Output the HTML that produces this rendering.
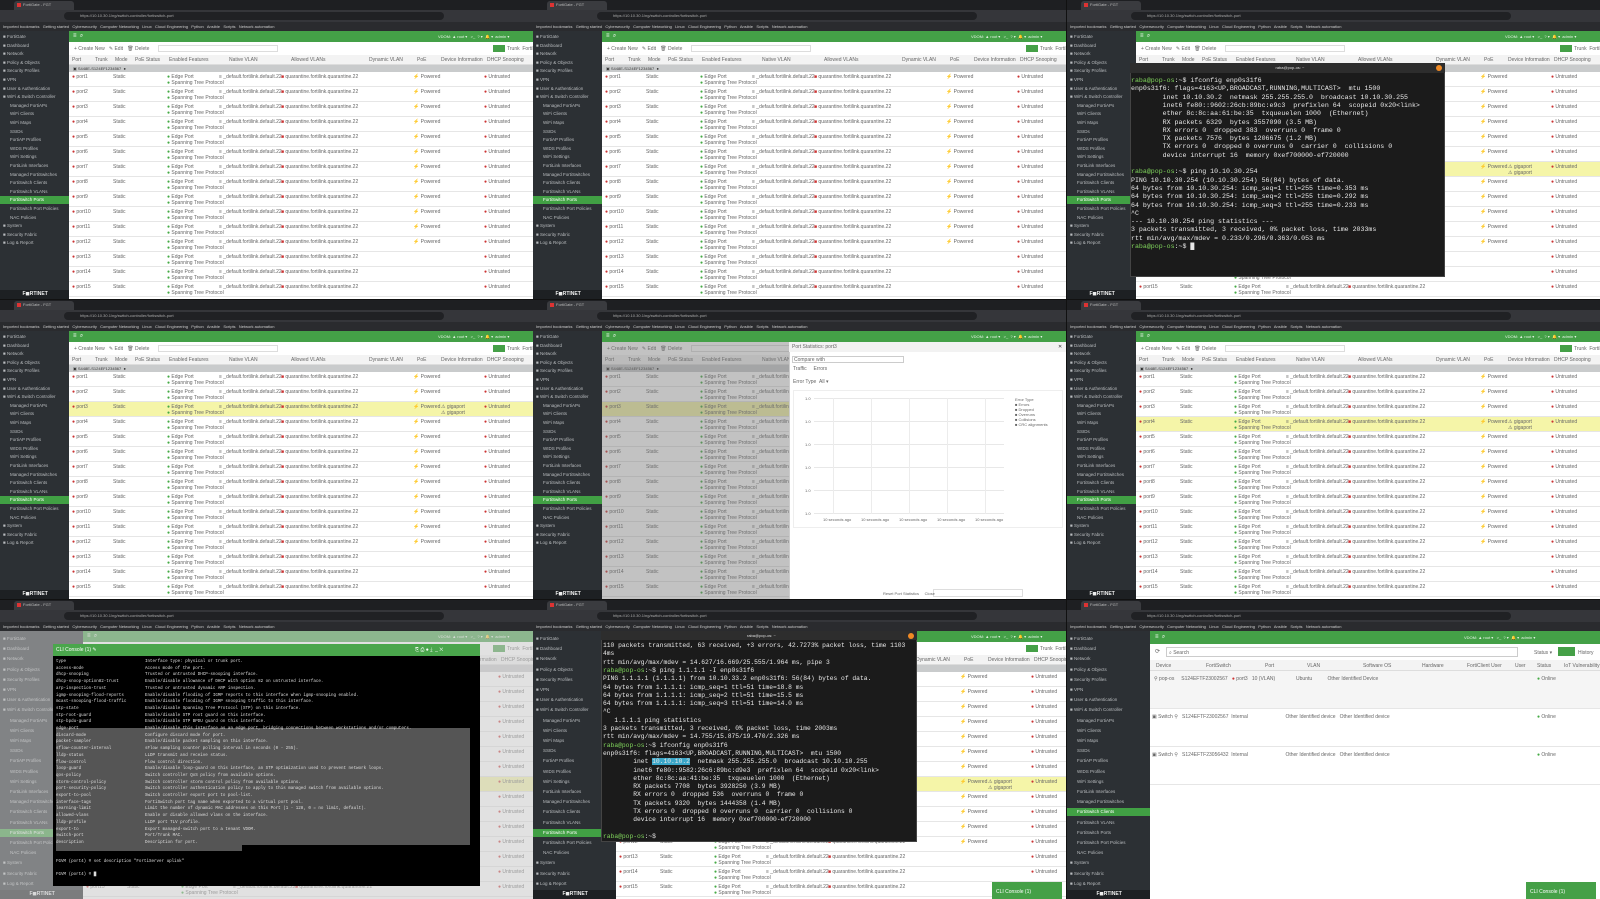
<!DOCTYPE html>
<html><head><meta charset="utf-8">
<style>
*{margin:0;padding:0;box-sizing:border-box}
body{width:1600px;height:899px;background:#111;overflow:hidden;position:relative;font-family:"Liberation Sans",sans-serif}
.p{position:absolute;width:533px;height:299px;overflow:hidden;background:#fff}
.a{position:absolute}
.t{position:absolute;white-space:nowrap;font-size:5px;color:#666;line-height:6px}
.mono{font-family:"Liberation Mono",monospace;white-space:pre}
</style></head><body>
<div id="root"></div>
<script>
var side=["FortiGate","Dashboard","Network","Policy & Objects","Security Profiles","VPN","User & Authentication","WiFi & Switch Controller","Managed FortiAPs","WiFi Clients","WiFi Maps","SSIDs","FortiAP Profiles","WIDS Profiles","WiFi Settings","FortiLink Interfaces","Managed FortiSwitches","FortiSwitch Clients","FortiSwitch VLANs","FortiSwitch Ports","FortiSwitch Port Policies","NAC Policies","System","Security Fabric","Log & Report"];
function chrome(h){
 h+='<div class="a" style="left:0;top:0;width:533px;height:10px;background:#1e1f22"></div>';
 h+='<div class="a" style="left:14px;top:1px;width:60px;height:9px;background:#3a3b3f;border-radius:3px 3px 0 0"></div><div class="a" style="left:17px;top:3px;width:4px;height:4px;background:#d33"></div><div class="t" style="left:23px;top:2px;color:#bbb;font-size:4px">FortiGate - FGT</div>';
 h+='<div class="a" style="left:0;top:10px;width:533px;height:12px;background:#35363a"></div><div class="a" style="left:64px;top:12px;width:380px;height:8px;background:#202124;border-radius:4px"></div><div class="t" style="left:80px;top:13px;color:#aaa;font-size:4px">https://10.10.30.1/ng/switch-controller/fortiswitch-port</div>';
 h+='<div class="a" style="left:0;top:22px;width:533px;height:9px;background:#2a2b2e"></div><div class="t" style="left:3px;top:24px;color:#ccc;font-size:4px">Imported bookmarks &nbsp; Getting started &nbsp; Cybersecurity &nbsp; Computer Networking &nbsp; Linux &nbsp; Cloud Engineering &nbsp; Python &nbsp; Ansible &nbsp; Scripts &nbsp; Network automation</div>';
 return h;
}
function sidebar(h,w,act,top){
 h+='<div class="a" style="left:0;top:31px;width:'+w+'px;height:268px;background:#2c3034"></div>';
 var y=top;
 for(var i=0;i<side.length;i++){
  var sub=i>=8&&i<=21;
  if(i==act)h+='<div class="a" style="left:0;top:'+(y-1)+'px;width:'+w+'px;height:8px;background:#41a044"></div>';
  h+='<div class="t" style="left:'+(sub?10:3)+'px;top:'+y+'px;color:'+(i==act?'#fff':'#b9bcbf')+';font-size:4.5px">'+(sub?'':'■ ')+side[i]+'</div>';
  y+=(w>75?10.2:8.6);
 }
 h+='<div class="a" style="left:0;top:290px;width:'+w+'px;height:9px;background:#1d2023"></div><div class="t" style="left:'+(w/2-12)+'px;top:291px;color:#eee;font-weight:bold">F◼RTINET</div>';
 return h;
}
function tbl(h,x,hl){
 h+='<div class="a" style="left:'+x+'px;top:31px;width:'+(533-x)+'px;height:11px;background:#44a047"></div><div class="t" style="left:'+(x+4)+'px;top:33px;color:#fff;font-size:6px">≡ &nbsp;⌕</div><div class="t" style="left:'+(533-95)+'px;top:34px;color:#e6f3e6;font-size:4px">VDOM: ▲ root ▾ &nbsp; &gt;_ &nbsp;? ▾ &nbsp;🔔 ▾ &nbsp;admin ▾</div>';
 h+='<div class="t" style="left:'+(x+5)+'px;top:46px">+ Create New &nbsp; ✎ Edit &nbsp; 🗑 Delete</div><div class="a" style="left:'+(x+89)+'px;top:45px;width:120px;height:7px;border:1px solid #ddd"></div>';
 h+='<div class="a" style="left:'+(533-40)+'px;top:45px;width:12px;height:7px;background:#45a047"></div><div class="t" style="left:'+(533-26)+'px;top:46px">Trunk &nbsp;FortiLink</div>';
 h+='<div class="a" style="left:'+x+'px;top:55px;width:'+(533-x)+'px;height:10px;background:#f3f3f3;border-bottom:1px solid #ddd"></div>';
 var hd=["Port","Trunk","Mode","PoE Status","Enabled Features","Native VLAN","Allowed VLANs","Dynamic VLAN","PoE","Device Information","DHCP Snooping"],cx=[3,26,46,66,100,160,222,300,348,372,418];
 for(var i=0;i<hd.length;i++)if(x+cx[i]<533)h+='<div class="t" style="left:'+(x+cx[i])+'px;top:57px">'+hd[i]+'</div>';
 h+='<div class="a" style="left:'+x+'px;top:65px;width:'+(533-x)+'px;height:7px;background:#c9cbcc"></div><div class="t" style="left:'+(x+4)+'px;top:66px;color:#333;font-size:4px">▣ S448E-S124EF1234567 &nbsp;●</div>';
 for(var r=0;r<15;r++){
  var y=72+r*15;
  if(r==hl)h+='<div class="a" style="left:'+x+'px;top:'+y+'px;width:'+(533-x)+'px;height:15px;background:#f5f5a8"></div>';
  h+='<div class="a" style="left:'+x+'px;top:'+(y+14)+'px;width:'+(533-x)+'px;height:1px;background:#e6e6e6"></div>';
  h+='<div class="t" style="left:'+(x+3)+'px;top:'+(y+2)+'px"><span style="color:#c33">●</span> port'+(r+1)+'</div><div class="t" style="left:'+(x+44)+'px;top:'+(y+2)+'px">Static</div>';
  h+='<div class="t" style="left:'+(x+98)+'px;top:'+(y+2)+'px"><span style="color:#4a4">●</span> Edge Port<br><span style="color:#4a4">●</span> Spanning Tree Protocol</div>';
  h+='<div class="t" style="left:'+(x+150)+'px;top:'+(y+2)+'px">≡ _default.fortilink.default.22</div><div class="t" style="left:'+(x+212)+'px;top:'+(y+2)+'px"><span style="color:#c33">■</span> quarantine.fortilink.quarantine.22</div>';
  if(r<12)h+='<div class="t" style="left:'+(x+344)+'px;top:'+(y+2)+'px">⚡ Powered</div>';
  if(r==hl)h+='<div class="t" style="left:'+(x+372)+'px;top:'+(y+2)+'px">⚠ gigaport<br>⚠ gigaport</div>';
  h+='<div class="t" style="left:'+(x+415)+'px;top:'+(y+2)+'px"><span style="color:#c33">●</span> Untrusted</div>';
 }
 return h;
}
function term(h,x,y,w,ht,lines,title){
 h+='<div class="a" style="left:'+x+'px;top:'+y+'px;width:'+w+'px;height:'+ht+'px;background:#1b1b1b;border:1px solid #444"></div>';
 h+='<div class="a" style="left:'+x+'px;top:'+y+'px;width:'+w+'px;height:'+(title||9)+'px;background:#2d2d2d"></div><div class="t" style="left:'+(x+w/2-12)+'px;top:'+(y+2)+'px;color:#ddd;font-size:4px">raba@pop-os: ~</div><div class="a" style="left:'+(x+w-9)+'px;top:'+(y+2)+'px;width:6px;height:6px;border-radius:3px;background:#f08a24"></div>';
 return h;
}
function tline(x,y,lh,fs,lines){
 var h='';for(var i=0;i<lines.length;i++){var l=lines[i];
  h+='<div class="t mono" style="left:'+x+'px;top:'+(y+i*lh)+'px;font-size:'+fs+'px;line-height:'+lh+'px;color:#e8e8e8">'+l.replace(/^raba@pop-os:~\$/,'<span style="color:#7fd35b">raba@pop-os</span>:~$')+'</div>';}
 return h;
}
var out='';
function P(l,t,inner){out+='<div class="p" style="left:'+l+'px;top:'+t+'px">'+inner+'</div>';}
var a=chrome('');a=sidebar(a,69,19,34);a=tbl(a,69,-1);P(0,0,a);
a=chrome('');a=sidebar(a,69,19,34);a=tbl(a,69,-1);P(533,0,a);
a=chrome('');a=sidebar(a,69,19,34);a=tbl(a,69,6);
a=term(a,63,63,315,214,null,10);
a+=tline(64,77,8.3,6.6,["raba@pop-os:~$ ifconfig enp0s31f6","enp0s31f6: flags=4163&lt;UP,BROADCAST,RUNNING,MULTICAST&gt;  mtu 1500","        inet 10.10.30.2  netmask 255.255.255.0  broadcast 10.10.30.255","        inet6 fe80::9602:26cb:89bc:e9c3  prefixlen 64  scopeid 0x20&lt;link&gt;","        ether 8c:8c:aa:61:be:35  txqueuelen 1000  (Ethernet)","        RX packets 6329  bytes 3557090 (3.5 MB)","        RX errors 0  dropped 383  overruns 0  frame 0","        TX packets 7576  bytes 1206675 (1.2 MB)","        TX errors 0  dropped 0 overruns 0  carrier 0  collisions 0","        device interrupt 16  memory 0xef700000-ef720000","","raba@pop-os:~$ ping 10.10.30.254","PING 10.10.30.254 (10.10.30.254) 56(84) bytes of data.","64 bytes from 10.10.30.254: icmp_seq=1 ttl=255 time=0.353 ms","64 bytes from 10.10.30.254: icmp_seq=2 ttl=255 time=0.292 ms","64 bytes from 10.10.30.254: icmp_seq=3 ttl=255 time=0.233 ms","^C","--- 10.10.30.254 ping statistics ---","3 packets transmitted, 3 received, 0% packet loss, time 2033ms","rtt min/avg/max/mdev = 0.233/0.296/0.363/0.053 ms","raba@pop-os:~$ █"]);
P(1067,0,a);
a=chrome('');a=sidebar(a,69,19,34);a=tbl(a,69,2);P(0,300,a);
a=chrome('');a=sidebar(a,69,19,34);a=tbl(a,69,2);
a+='<div class="a" style="left:69px;top:42px;width:188px;height:257px;background:rgba(120,120,120,.45)"></div>';
a+='<div class="a" style="left:256px;top:42px;width:277px;height:257px;background:#fff;border-left:1px solid #ccc"></div><div class="a" style="left:256px;top:42px;width:277px;height:10px;background:#f2f2f2"></div><div class="t" style="left:259px;top:44px">Port Statistics: port3</div><div class="t" style="left:525px;top:44px;color:#333">✕</div>';
a+='<div class="a" style="left:259px;top:56px;width:112px;height:7px;border:1px solid #ccc"></div><div class="t" style="left:261px;top:57px">Compare with</div><div class="t" style="left:260px;top:66px">Traffic &nbsp; &nbsp; Errors</div><div class="t" style="left:260px;top:79px">Error Type &nbsp;All ▾</div>';
a+='<div class="a" style="left:260px;top:90px;width:270px;height:138px;border:1px solid #eee"></div>';
for(var i=0;i<6;i++)a+='<div class="a" style="left:281px;top:'+(98+i*23)+'px;width:190px;height:1px;background:#e8e8e8"></div><div class="t" style="left:272px;top:'+(96+i*23)+'px;font-size:4px">1.0</div>';
for(var i=0;i<5;i++)a+='<div class="a" style="left:'+(300+i*38)+'px;top:98px;width:1px;height:116px;background:#ececec"></div><div class="t" style="left:'+(290+i*38)+'px;top:217px;font-size:4px">10 seconds ago</div>';
a+='<div class="t" style="left:482px;top:97px;font-size:4px;line-height:5px">Error Type<br>■ Errors<br>■ Dropped<br>■ Overruns<br>■ Collisions<br>■ CRC alignments</div>';
a+='<div class="a" style="left:400px;top:289px;width:90px;height:8px;border:1px solid #ddd"></div><div class="t" style="left:350px;top:291px;font-size:4px">Reset Port Statistics &nbsp; &nbsp; Close</div>';
P(533,300,a);
a=chrome('');a=sidebar(a,69,19,34);a=tbl(a,69,3);P(1067,300,a);
a=chrome('');a=sidebar(a,83,19,36);a=tbl(a,83,7);
a+='<div class="a" style="left:0;top:31px;width:533px;height:268px;background:rgba(200,200,200,.55)"></div>';
a+='<div class="a" style="left:53px;top:44px;width:427px;height:242px;background:#000"></div><div class="a" style="left:53px;top:44px;width:427px;height:12px;background:#4aa64c"></div><div class="t" style="left:56px;top:47px;color:#fff">CLI Console (1) ✎</div><div class="t" style="left:415px;top:47px;color:#fff">⎘ ⎙ ● ⤓ &nbsp;_ ✕</div>';
a+='<div class="a" style="left:56px;top:128px;width:414px;height:117px;background:#555"></div><div class="a" style="left:56px;top:245px;width:186px;height:6px;background:#555"></div>';
var k=["type","access-mode","dhcp-snooping","dhcp-snoop-option82-trust","arp-inspection-trust","igmp-snooping-flood-reports","mcast-snooping-flood-traffic","stp-state","stp-root-guard","stp-bpdu-guard","edge-port","discard-mode","packet-sampler","sflow-counter-interval","lldp-status","flow-control","loop-guard","qos-policy","storm-control-policy","port-security-policy","export-to-pool","interface-tags","learning-limit","allowed-vlans","lldp-profile","export-to","switch-port","description"];
var v=["Interface type: physical or trunk port.","Access mode of the port.","Trusted or untrusted DHCP-snooping interface.","Enable/disable allowance of DHCP with option 82 on untrusted interface.","Trusted or untrusted dynamic ARP inspection.","Enable/disable flooding of IGMP reports to this interface when igmp-snooping enabled.","Enable/disable flooding of IGMP snooping traffic to this interface.","Enable/disable Spanning Tree Protocol (STP) on this interface.","Enable/disable STP root guard on this interface.","Enable/disable STP BPDU guard on this interface.","Enable/disable this interface as an edge port, bridging connections between workstations and/or computers.","Configure discard mode for port.","Enable/disable packet sampling on this interface.","sFlow sampling counter polling interval in seconds (0 - 255).","LLDP transmit and receive status.","Flow control direction.","Enable/disable loop-guard on this interface, an STP optimization used to prevent network loops.","Switch controller QoS policy from available options.","Switch controller storm control policy from available options.","Switch controller authentication policy to apply to this managed switch from available options.","Switch controller export port to pool-list.","FortiSwitch port tag name when exported to a virtual port pool.","Limit the number of dynamic MAC addresses on this Port (1 - 128, 0 = no limit, default).","Enable or disable allowed vlans on the interface.","LLDP port TLV profile.","Export managed-switch port to a tenant VDOM.","Port/Trunk MAC.","Description for port."];
for(var i=0;i<k.length;i++){a+='<div class="t mono" style="left:56px;top:'+(59+i*6.7)+'px;color:#ddd;font-size:4.2px">'+k[i]+'</div><div class="t mono" style="left:145px;top:'+(59+i*6.7)+'px;color:#ddd;font-size:4.2px">'+v[i]+'</div>';}
a+='<div class="t mono" style="left:56px;top:259px;color:#ddd;font-size:4.2px">FGVM (port4) # set description "FortiServer uplink"</div><div class="t mono" style="left:56px;top:272px;color:#ddd;font-size:4.2px">FGVM (port4) # █</div>';
P(0,600,a);
a=chrome('');a=sidebar(a,83,19,36);
a+=tbl('',83,7);
a+='<div class="a" style="left:459px;top:282px;width:70px;height:17px;background:#45a047"></div><div class="t" style="left:463px;top:289px;color:#fff">CLI Console (1)</div>';
a=term(a,68,31,316,211,null,9);
a+=tline(70,42,8.3,6.3,["110 packets transmitted, 63 received, +3 errors, 42.7273% packet loss, time 1103","4ms","rtt min/avg/max/mdev = 14.627/16.669/25.555/1.964 ms, pipe 3","raba@pop-os:~$ ping 1.1.1.1 -I enp0s31f6","PING 1.1.1.1 (1.1.1.1) from 10.10.33.2 enp0s31f6: 56(84) bytes of data.","64 bytes from 1.1.1.1: icmp_seq=1 ttl=51 time=18.8 ms","64 bytes from 1.1.1.1: icmp_seq=2 ttl=51 time=15.5 ms","64 bytes from 1.1.1.1: icmp_seq=3 ttl=51 time=14.0 ms","^C","   1.1.1.1 ping statistics","3 packets transmitted, 3 received, 0% packet loss, time 2003ms","rtt min/avg/max/mdev = 14.755/15.875/19.470/2.326 ms","raba@pop-os:~$ ifconfig enp0s31f6","enp0s31f6: flags=4163&lt;UP,BROADCAST,RUNNING,MULTICAST&gt;  mtu 1500","        inet <span style=\"background:#3aa6c8\">10.10.10.2</span>  netmask 255.255.255.0  broadcast 10.10.10.255","        inet6 fe80::9582:26c6:89bc:d9e3  prefixlen 64  scopeid 0x20&lt;link&gt;","        ether 8c:8c:aa:41:be:35  txqueuelen 1000  (Ethernet)","        RX packets 7708  bytes 3928250 (3.9 MB)","        RX errors 0  dropped 536  overruns 0  frame 0","        TX packets 9320  bytes 1444358 (1.4 MB)","        TX errors 0  dropped 0 overruns 0  carrier 0  collisions 0","        device interrupt 16  memory 0xef700000-ef720000","","raba@pop-os:~$ "]);
P(533,600,a);
a=chrome('');a=sidebar(a,83,17,36);
a+='<div class="a" style="left:83px;top:31px;width:450px;height:13px;background:#44a047"></div><div class="t" style="left:88px;top:34px;color:#fff;font-size:6px">≡ &nbsp;⌕</div><div class="t" style="left:397px;top:35px;color:#e6f3e6;font-size:4px">VDOM: ▲ root ▾ &nbsp; &gt;_ &nbsp;? ▾ &nbsp;🔔 ▾ &nbsp;admin ▾</div>';
a+='<div class="t" style="left:88px;top:49px;font-size:6px">⟳</div><div class="a" style="left:99px;top:47px;width:352px;height:10px;border:1px solid #ccc"></div><div class="t" style="left:102px;top:50px">⌕ Search</div><div class="t" style="left:467px;top:50px">Status ▾</div><div class="a" style="left:491px;top:47px;width:17px;height:9px;background:#45a047"></div><div class="t" style="left:511px;top:50px">History</div>';
a+='<div class="a" style="left:83px;top:60px;width:450px;height:11px;background:#f3f3f3;border-bottom:1px solid #ddd"></div>';
var hh=["Device","FortiSwitch","Port","VLAN","Software OS","Hardware","FortiClient User","User","Status","IoT Vulnerability"],hx=[89,139,198,240,296,355,400,448,470,497];
for(var i=0;i<hh.length;i++)a+='<div class="t" style="left:'+hx[i]+'px;top:63px">'+hh[i]+'</div>';
a+='<div class="a" style="left:83px;top:71px;width:450px;height:38px;background:#f5f5f5"></div>';
for(var r=0;r<3;r++){var y=71+r*38;a+='<div class="a" style="left:83px;top:'+(y+37)+'px;width:450px;height:1px;background:#e6e6e6"></div>';}
a+='<div class="t" style="left:87px;top:76px">⚲ pop-os &nbsp; &nbsp; S124EFTF23002567 &nbsp; <span style="color:#c33">●</span> port3 &nbsp; 10 (VLAN) &nbsp; &nbsp; &nbsp; &nbsp; &nbsp; &nbsp; &nbsp; Ubuntu &nbsp; &nbsp; &nbsp; &nbsp; &nbsp; Other Identified Device</div><div class="t" style="left:470px;top:76px"><span style="color:#4a4">●</span> Online</div>';
a+='<div class="t" style="left:85px;top:114px">▣ Switch ⚲ &nbsp; S124EFTF23002567 &nbsp;Internal &nbsp; &nbsp; &nbsp; &nbsp; &nbsp; &nbsp; &nbsp; &nbsp; &nbsp; &nbsp; &nbsp; &nbsp; &nbsp; Other Identified device &nbsp; Other Identified device</div><div class="t" style="left:470px;top:114px"><span style="color:#4a4">●</span> Online</div>';
a+='<div class="t" style="left:85px;top:152px">▣ Switch ⚲ &nbsp; S124EFTF23056432 &nbsp;Internal &nbsp; &nbsp; &nbsp; &nbsp; &nbsp; &nbsp; &nbsp; &nbsp; &nbsp; &nbsp; &nbsp; &nbsp; &nbsp; Other Identified device &nbsp; Other Identified device</div><div class="t" style="left:470px;top:152px"><span style="color:#4a4">●</span> Online</div>';
a+='<div class="a" style="left:459px;top:282px;width:70px;height:17px;background:#45a047"></div><div class="t" style="left:463px;top:289px;color:#fff">CLI Console (1)</div>';
P(1067,600,a);
document.getElementById('root').innerHTML=out;
</script>
</body></html>
